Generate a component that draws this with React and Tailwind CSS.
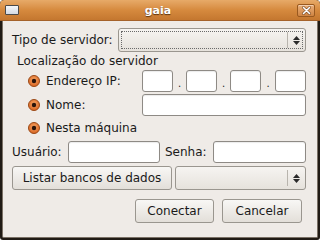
import React from "react";

const font = { fontFamily: '"DejaVu Sans", "Liberation Sans", sans-serif' };

function Radio() {
  return (
    <svg width="12" height="12" viewBox="0 0 12 12" className="shrink-0">
      <defs>
        <radialGradient id="rg" cx="50%" cy="40%" r="60%">
          <stop offset="0%" stopColor="#f7a867" />
          <stop offset="100%" stopColor="#d8621f" />
        </radialGradient>
      </defs>
      <circle cx="6" cy="6" r="5.5" fill="url(#rg)" stroke="#9a4a18" strokeWidth="1" />
      <circle cx="6" cy="6" r="2.2" fill="#2a140a" />
    </svg>
  );
}

function Entry({ className = "" }) {
  return (
    <div
      className={
        "h-[22px] bg-white border border-[#8e8a85] rounded-[3px] shadow-[inset_0_1px_1px_rgba(0,0,0,0.08)] " +
        className
      }
    />
  );
}

function Combo({ className = "", focus = false, h = "h-[24px]" }) {
  return (
    <div
      className={
        h +
        " relative border border-[#9a968f] rounded-[3px] bg-gradient-to-b from-[#f6f4f1] to-[#e6e2dc] flex items-stretch " +
        className
      }
    >
      {focus && (
        <div className="absolute left-[2px] right-[2px] top-[2px] bottom-[2px] border border-dotted border-[#6a6a6a]" />
      )}
      <div className="flex-1" />
      <div className="w-px my-[3px] bg-[#b8b4ad]" />
      <div className="w-[17px] flex flex-col items-center justify-center gap-[1px]">
        <svg width="7" height="4" viewBox="0 0 7 4">
          <polygon points="3.5,0 7,4 0,4" fill="#2a2a2a" />
        </svg>
        <svg width="7" height="4" viewBox="0 0 7 4">
          <polygon points="0,0 7,0 3.5,4" fill="#2a2a2a" />
        </svg>
      </div>
    </div>
  );
}

function Button({ children, className = "" }) {
  return (
    <div
      className={
        "h-[24px] border border-[#9a968f] rounded-[3px] bg-gradient-to-b from-[#f8f7f5] to-[#e3dfd9] flex items-center justify-center text-[12px] text-[#1a1a1a] " +
        className
      }
    >
      {children}
    </div>
  );
}

export default function App() {
  return (
    <div
      className="w-[320px] h-[240px] flex flex-col bg-[#211b15] rounded-t-[4px] rounded-b-[3px] overflow-hidden"
      style={font}
    >
      {/* Title bar */}
      <div className="h-[21px] shrink-0 flex items-center bg-gradient-to-b from-[#e7aa68] via-[#d68a3e] to-[#c4772f] border-b border-[#a5622a] rounded-t-[4px] relative">
        <div className="ml-[5px] w-[14px] h-[10px] border border-[#4a4a4a] bg-gradient-to-b from-[#f4f6f9] to-[#d4dae3] rounded-[1px]" />
        <div className="flex-1 text-center text-[11px] font-bold text-white [text-shadow:0_1px_1px_#5a3410] leading-none">
          gaia
        </div>
        <div className="mr-[5px] w-[18px] h-[13px] border border-[#99591f] rounded-[2px] bg-gradient-to-b from-[#eab07a] to-[#cf8442] flex items-center justify-center shadow-[inset_0_1px_0_rgba(255,255,255,0.4)]">
          <svg width="9" height="9" viewBox="0 0 9 9">
            <path d="M1.5 1.5 L7.5 7.5 M7.5 1.5 L1.5 7.5" stroke="#6a3a12" strokeWidth="2.6" strokeLinecap="round" />
            <path d="M1.5 1.5 L7.5 7.5 M7.5 1.5 L1.5 7.5" stroke="#ffffff" strokeWidth="1.7" strokeLinecap="round" />
          </svg>
        </div>
      </div>

      {/* Body */}
      <div className="flex-1 mx-[2px] mb-[2px] bg-[#efebe7] border-l border-r border-b border-[#7b7166] rounded-b-[2px] pl-[9px] pr-[11px] pt-[7px] text-[12px] text-[#1a1a1a] flex flex-col">
        {/* Tipo de servidor */}
        <div className="h-[24px] flex items-center">
          <span className="flex-1">Tipo de servidor:</span>
          <Combo className="w-[188px]" focus h="h-[24px]" />
        </div>

        <div className="h-[18px] flex items-center ml-[5px]">Localização do servidor</div>

        {/* Endereço IP */}
        <div className="h-[22px] flex items-center">
          <div className="w-[130px] flex items-center pl-[16px] gap-[6px]">
            <Radio />
            <span>Endereço IP:</span>
          </div>
          <Entry className="w-[31px]" />
          <span className="w-[13px] text-center self-end leading-[16px] text-[10px]">.</span>
          <Entry className="w-[31px]" />
          <span className="w-[13px] text-center self-end leading-[16px] text-[10px]">.</span>
          <Entry className="w-[31px]" />
          <span className="w-[14px] text-center self-end leading-[16px] text-[10px]">.</span>
          <Entry className="w-[31px]" />
        </div>

        {/* Nome */}
        <div className="h-[22px] mt-[2px] flex items-center">
          <div className="w-[130px] flex items-center pl-[16px] gap-[6px]">
            <Radio />
            <span>Nome:</span>
          </div>
          <Entry className="flex-1" />
        </div>

        {/* Nesta máquina */}
        <div className="h-[22px] mt-[1px] flex items-center pl-[16px] gap-[6px]">
          <Radio />
          <span>Nesta máquina</span>
        </div>

        {/* Usuário / Senha */}
        <div className="h-[22px] mt-[2px] flex items-center">
          <span className="w-[56px]">Usuário:</span>
          <Entry className="w-[92px]" />
          <span className="w-[53px] pl-[5px]">Senha:</span>
          <Entry className="flex-1" />
        </div>

        {/* Listar */}
        <div className="h-[24px] mt-[3px] flex items-center">
          <Button className="w-[160px]">Listar bancos de dados</Button>
          <Combo className="flex-1 ml-[3px]" h="h-[24px]" />
        </div>

        {/* Buttons */}
        <div className="mt-[9px] flex justify-end gap-[8px] pr-[4px]">
          <Button className="w-[79px]">Conectar</Button>
          <Button className="w-[80px]">Cancelar</Button>
        </div>
      </div>
    </div>
  );
}
